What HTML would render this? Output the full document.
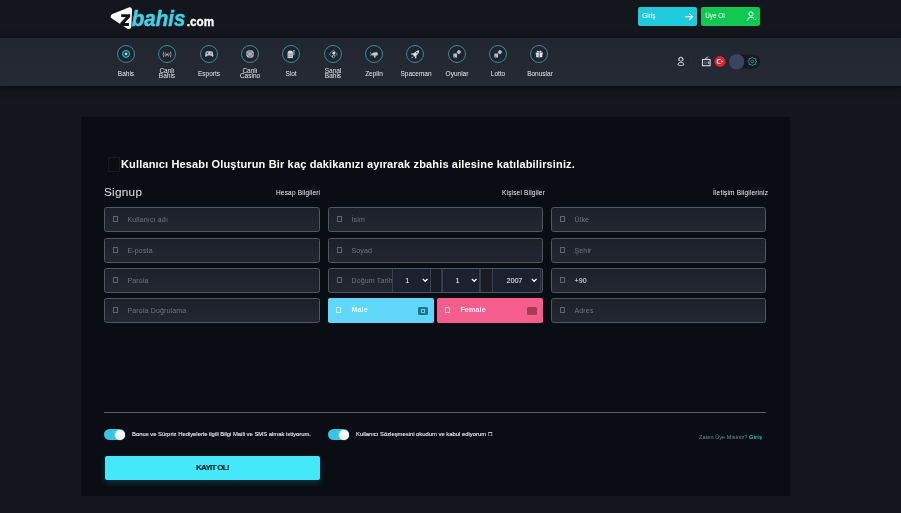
<!DOCTYPE html><html><head><meta charset="utf-8"><style>
*{margin:0;padding:0;box-sizing:border-box}
html,body{width:901px;height:513px;overflow:hidden;background:#13161d;font-family:"Liberation Sans",sans-serif;color:#fff}
.a{position:absolute}
body>div,body>svg{will-change:transform}
#top{left:0;top:0;width:901px;height:38px;background:#14161e}
#nav{left:0;top:38px;width:901px;height:47.8px;background:linear-gradient(#212530,#252a35);box-shadow:0 2px 7px rgba(0,0,0,0.55)}
.btn{top:7.2px;height:19.2px;width:59px;border-radius:2px;font-size:6px;color:#fff}
.btn span{position:absolute;left:4.2px;top:6.3px;line-height:6px;letter-spacing:0px;font-size:6.4px}
.ni{top:44.9px;width:18.4px;height:18.4px;border-radius:50%;border:1px solid #3a8b93;background:rgba(10,30,40,0.22)}
.ni svg{position:absolute;left:0;top:0}
.nl{width:60px;text-align:center;font-size:6.5px;line-height:4.7px;color:#e6e9ed;letter-spacing:0px}
#card{left:81px;top:117px;width:709px;height:379px;background:#0a0d14}
.inp{height:25px;width:216px;background:linear-gradient(#1c2029,#222732);border:1px solid #4f5561;border-radius:2.5px}
.ic{position:absolute;width:4.6px;height:5.6px;border:0.75px solid #5f6570;border-radius:0.5px}
.ph{position:absolute;font-size:7px;line-height:7px;color:#686e7a;letter-spacing:0.15px;white-space:nowrap}
.sec{font-size:6.5px;line-height:7px;color:#e8eaee;letter-spacing:0.18px;white-space:nowrap}
</style></head><body>
<div class="a" id="top"></div><div class="a" id="nav"></div>
<svg class="a" style="left:0;top:0" width="230" height="38" viewBox="0 0 230 38">
<path d="M113.3 16.3 L129.6 9.9 L128.8 26.6 Z" fill="#fff" stroke="#fff" stroke-width="5" stroke-linejoin="round"/>
<path d="M121.2 14.2 H130.2 V17 L124.6 22.9 H128.9 V25.9 H120.2 V23.1 L125.9 17 H121.2 Z" fill="#111318"/>
<text x="131.8" y="26.2" font-family="Liberation Sans" font-weight="bold" font-style="italic" font-size="22.2" fill="#3dd3e8" stroke="#3dd3e8" stroke-width="0.5" textLength="53.5" lengthAdjust="spacingAndGlyphs">bahis</text>
<text x="186.8" y="26.3" font-family="Liberation Sans" font-weight="bold" font-size="13.6" fill="#fff" stroke="#fff" stroke-width="0.35" textLength="27.4" lengthAdjust="spacingAndGlyphs">.com</text>
</svg>
<div class="a btn" style="left:638.2px;background:#1fcadb"><span>Giriş</span><svg class="a" style="left:46px;top:5px" width="10" height="10" viewBox="0 0 10 10"><path d="M1.2 4.7H8.6M5 1.2L8.6 4.7L5 8.2" stroke="#fff" stroke-width="1.1" fill="none"/></svg></div>
<div class="a btn" style="left:701.2px;background:#11c853"><span>Üye Ol</span><svg class="a" style="left:45px;top:4px" width="12" height="11" viewBox="0 0 12 11"><circle cx="5" cy="3" r="2.1" stroke="#fff" stroke-width="0.9" fill="none"/><path d="M1.2 10Q1.4 6.2 5 6.2Q6.8 6.2 7.8 7.2" stroke="#fff" stroke-width="0.9" fill="none"/><path d="M8.6 8.4L10.4 7.2L10 9.2Z" fill="#fff"/></svg></div>
<div class="a ni" style="left:116.85px"><svg width="18.4" height="18.4" viewBox="0 0 18.4 18.4" style="position:absolute;left:-1px;top:-1px"><circle cx="9.05" cy="8.95" r="3.5" fill="#1a4d55" stroke="#4cc6d2" stroke-width="0.9"/><path d="M9.05 7.6L10.35 8.55L9.85 10.1H8.25L7.75 8.55Z" fill="#5fe0ea"/><circle cx="9.05" cy="8.95" r="1.1" fill="#7ff0f5"/></svg></div>
<div class="a nl" style="left:96.05px;top:72.3px">Bahis</div>
<div class="a ni" style="left:158.20px"><svg width="18.4" height="18.4" viewBox="0 0 18.4 18.4" style="position:absolute;left:-1px;top:-1px"><circle cx="9.1" cy="9.45" r="0.85" fill="#d0d3d8"/><path d="M7.5 7.6Q6.6 9.4 7.5 11.2M10.7 7.6Q11.6 9.4 10.7 11.2M5.8 6.6Q4.6 9.4 5.8 12.2M12.4 6.6Q13.6 9.4 12.4 12.2" stroke="#b8bcc3" stroke-width="0.75" fill="none"/><path d="M9.1 9.6L7.6 11.6M9.1 9.6L10.6 11.6" stroke="#9a9ea5" stroke-width="0.5"/></svg></div>
<div class="a nl" style="left:137.40px;top:69.4px">Canlı<br>Bahis</div>
<div class="a ni" style="left:199.55px"><svg width="18.4" height="18.4" viewBox="0 0 18.4 18.4" style="position:absolute;left:-1px;top:-1px"><path d="M5.6 7.6Q5.9 6.2 7.3 6.2H11.2Q12.6 6.2 12.9 7.6L13.4 10.7Q13.5 12 12.3 11.8L10.9 10.4H7.6L6.2 11.8Q5 12 5.1 10.7Z" fill="#c4c7cd"/><path d="M7.4 7.4V9.2M6.5 8.3H8.3" stroke="#3a3e48" stroke-width="0.7"/><circle cx="11" cy="8.2" r="0.6" fill="#3a3e48"/></svg></div>
<div class="a nl" style="left:178.75px;top:72.3px">Esports</div>
<div class="a ni" style="left:240.90px"><svg width="18.4" height="18.4" viewBox="0 0 18.4 18.4" style="position:absolute;left:-1px;top:-1px"><circle cx="9.0" cy="9.0" r="4.0" fill="#a9adb4"/><circle cx="9.0" cy="9.0" r="2.3" fill="none" stroke="#6e727a" stroke-width="0.7"/><path d="M9 5V6.4M9 11.6V13M5 9H6.4M11.6 9H13" stroke="#5a5e66" stroke-width="0.8"/></svg></div>
<div class="a nl" style="left:220.10px;top:69.4px">Canlı<br>Casino</div>
<div class="a ni" style="left:282.25px"><svg width="18.4" height="18.4" viewBox="0 0 18.4 18.4" style="position:absolute;left:-1px;top:-1px"><path d="M5.6 8.2Q5.6 5.4 8.4 5.4Q10.9 5.4 10.9 8.2V13.1H5.6Z" fill="#d6d9de"/><path d="M6.2 9.2H10.3M6.2 11.2H10.3" stroke="#4a4e58" stroke-width="0.6"/><path d="M11.9 5.4V10.2" stroke="#b9bdc4" stroke-width="1"/><circle cx="11.9" cy="5.6" r="0.6" fill="#d6d9de"/></svg></div>
<div class="a nl" style="left:261.45px;top:72.3px">Slot</div>
<div class="a ni" style="left:323.60px"><svg width="18.4" height="18.4" viewBox="0 0 18.4 18.4" style="position:absolute;left:-1px;top:-1px"><path d="M9.4 5.1L13.3 9.1L9.4 13.2L5.3 9.1Z" fill="none" stroke="#a8acb3" stroke-width="0.7"/><circle cx="9.8" cy="8.2" r="1.4" fill="#d8dbe0"/><path d="M8.2 12L9.5 9.6L10.9 11" stroke="#c4c7cd" stroke-width="0.9" fill="none"/></svg></div>
<div class="a nl" style="left:302.80px;top:69.4px">Sanal<br>Bahis</div>
<div class="a ni" style="left:364.95px"><svg width="18.4" height="18.4" viewBox="0 0 18.4 18.4" style="position:absolute;left:-1px;top:-1px"><path d="M6.4 8.9Q8.6 6.6 12.2 7.3Q13.4 8.6 12.6 10.2Q9.6 11.4 6.4 10Z" fill="#c9ccd2"/><path d="M5.3 7.2L6.4 9.4L5.6 11.2" stroke="#a8acb3" stroke-width="0.8" fill="none"/><path d="M8.6 10.6L9 12.6H10.6L10.8 10.6" fill="#b5b9c0"/></svg></div>
<div class="a nl" style="left:344.15px;top:72.3px">Zeplin</div>
<div class="a ni" style="left:406.30px"><svg width="18.4" height="18.4" viewBox="0 0 18.4 18.4" style="position:absolute;left:-1px;top:-1px"><path d="M13.2 5.2Q13.4 7.6 11.4 9.6L9 12L6.6 9.6L9 7.2Q11 5.2 13.2 5.2Z" fill="#dcdfe4"/><path d="M8 8.2L5.6 8.2L4.8 9.4L7.2 9.8ZM10.4 10.6L10.4 13L9.2 13.8L8.8 11.4Z" fill="#c9ccd2"/><circle cx="10.9" cy="7.7" r="0.8" fill="#3a3e48"/><path d="M7.2 11.6L5.6 13.2" stroke="#c9ccd2" stroke-width="1"/></svg></div>
<div class="a nl" style="left:385.50px;top:72.3px">Spaceman</div>
<div class="a ni" style="left:447.65px"><svg width="18.4" height="18.4" viewBox="0 0 18.4 18.4" style="position:absolute;left:-1px;top:-1px"><rect x="5.3" y="8.6" width="3.8" height="3.8" rx="0.5" fill="#b9bdc4"/><rect x="9.2" y="5.4" width="3.4" height="3.4" rx="0.5" fill="#c4c7cd" transform="rotate(40 10.9 7.1)"/><circle cx="6.5" cy="11.2" r="0.45" fill="#4a4e58"/><circle cx="10.9" cy="7.1" r="0.45" fill="#4a4e58"/></svg></div>
<div class="a nl" style="left:426.85px;top:72.3px">Oyunlar</div>
<div class="a ni" style="left:489.00px"><svg width="18.4" height="18.4" viewBox="0 0 18.4 18.4" style="position:absolute;left:-1px;top:-1px"><rect x="5.3" y="8.6" width="3.8" height="3.8" rx="0.5" fill="#b9bdc4"/><rect x="9.2" y="5.4" width="3.4" height="3.4" rx="0.5" fill="#c4c7cd" transform="rotate(40 10.9 7.1)"/><circle cx="6.5" cy="11.2" r="0.45" fill="#4a4e58"/><circle cx="10.9" cy="7.1" r="0.45" fill="#4a4e58"/></svg></div>
<div class="a nl" style="left:468.20px;top:72.3px">Lotto</div>
<div class="a ni" style="left:530.35px"><svg width="18.4" height="18.4" viewBox="0 0 18.4 18.4" style="position:absolute;left:-1px;top:-1px"><path d="M5.7 7.4H12.8V9.2H5.7ZM6.2 9.2H12.3V12.3H6.2Z" fill="#dfe2e6"/><path d="M9.25 7.4V12.3" stroke="#3a3e48" stroke-width="0.8"/><path d="M9.2 7.2Q7.6 5.2 6.9 6.2Q6.6 7 9.2 7.2Q11.8 7 11.5 6.2Q10.8 5.2 9.2 7.2" fill="#dfe2e6" stroke="#dfe2e6" stroke-width="0.4"/></svg></div>
<div class="a nl" style="left:509.55px;top:72.3px">Bonuslar</div>
<svg class="a" style="left:670px;top:50px" width="100" height="25" viewBox="670 50 100 25">
<circle cx="680.9" cy="59.4" r="1.9" fill="none" stroke="#cfd3d9" stroke-width="0.9"/>
<path d="M677.8 64.9 Q678 62.3 680.9 62.3 Q683.8 62.3 684 64.9 Q680.9 66.2 677.8 64.9Z" fill="none" stroke="#cfd3d9" stroke-width="0.9"/>
<path d="M678.6 60.6 Q678.2 57 680.9 57 Q683.6 57 683.2 60.6" fill="none" stroke="#cfd3d9" stroke-width="0.7"/>
<path d="M691.2 56.8V66" stroke="#2b313b" stroke-width="0.8"/>
<rect x="702.5" y="59.5" width="7.6" height="6.2" fill="none" stroke="#d5d8dd" stroke-width="1.1"/>
<rect x="704" y="61" width="3.6" height="3.2" fill="#4a4f59"/>
<rect x="708.2" y="61.4" width="1" height="2.6" fill="#d5d8dd"/>
<path d="M705 59.2L706.3 57.6L707.3 59M706.3 57.6L708.6 56.8" stroke="#d5d8dd" stroke-width="0.7" fill="none"/>
<path d="M728.5 61.5 A7 7 0 0 1 735.5 54.5 H753 A7.1 7.1 0 0 1 753 68.7 H735.5 A7 7 0 0 1 728.5 61.5Z" fill="#151a21"/>
<circle cx="720" cy="61.5" r="5.4" fill="#de2431"/>
<circle cx="719.2" cy="61.5" r="2.5" fill="#fff"/>
<circle cx="719.9" cy="61.5" r="2" fill="#de2431"/>
<circle cx="722.4" cy="61.5" r="0.8" fill="#fff"/>
<circle cx="736.6" cy="61.7" r="7.7" fill="#3a4560"/>
<path d="M752.4 56.9 L753.6 58.6 L755.8 58.5 L755.6 60.6 L757 61.4 L755.6 62.4 L755.8 64.4 L753.6 64.3 L752.4 66 L751.2 64.3 L749 64.4 L749.2 62.4 L747.8 61.4 L749.2 60.6 L749 58.5 L751.2 58.6Z" fill="none" stroke="#2f9da3" stroke-width="0.8"/>
<circle cx="752.4" cy="61.4" r="1.4" fill="none" stroke="#2f9da3" stroke-width="0.7"/>
</svg>
<div class="a" id="card"></div>
<div class="a" style="left:107.8px;top:157px;width:12px;height:15px;background:#0b0d11;border:1px solid #171a20"></div>
<div class="a" style="left:121px;top:158px;font-size:11px;font-weight:bold;line-height:13px;color:#fff;letter-spacing:0.15px;white-space:nowrap">Kullanıcı Hesabı Oluşturun Bir kaç dakikanızı ayırarak zbahis ailesine katılabilirsiniz.</div>
<div class="a" style="left:104.4px;top:186.3px;font-size:11.8px;line-height:13px;color:#dfe2e6;letter-spacing:0.25px">Signup</div>
<div class="a" style="left:303.5px;top:185px;font-size:13px;line-height:14px;font-weight:bold;color:transparent;-webkit-text-stroke:0.6px #1d2028;white-space:nowrap">01</div>
<div class="a" style="left:527.3px;top:185px;font-size:13px;line-height:14px;font-weight:bold;color:transparent;-webkit-text-stroke:0.6px #1d2028;white-space:nowrap">02</div>
<div class="a" style="left:750.5px;top:185px;font-size:13px;line-height:14px;font-weight:bold;color:transparent;-webkit-text-stroke:0.6px #1d2028;white-space:nowrap">03</div>
<div class="a sec" style="left:275.6px;top:188.6px">Hesap Bilgileri</div>
<div class="a sec" style="left:502.4px;top:188.6px">Kişisel Bilgiler</div>
<div class="a sec" style="left:712.6px;top:188.6px">İletişim Bilgileriniz</div>
<div class="a inp" style="left:104.4px;top:207.1px;width:216px;height:24.6px"><div class="ic" style="left:7.5px;top:7.6px;width:5px;height:6.2px"></div><div class="ph" style="left:22.5px;top:7.5px;color:#6f7581">Kullanıcı adı</div></div>
<div class="a inp" style="left:104.4px;top:237.6px;width:216px;height:24.6px"><div class="ic" style="left:7.5px;top:7.6px;width:5px;height:6.2px"></div><div class="ph" style="left:22.5px;top:7.5px;color:#6f7581">E-posta</div></div>
<div class="a inp" style="left:104.4px;top:267.9px;width:216px;height:24.6px"><div class="ic" style="left:7.5px;top:7.6px;width:5px;height:6.2px"></div><div class="ph" style="left:22.5px;top:7.5px;color:#6f7581">Parola</div></div>
<div class="a inp" style="left:104.4px;top:298.3px;width:216px;height:24.6px"><div class="ic" style="left:7.5px;top:7.6px;width:5px;height:6.2px"></div><div class="ph" style="left:22.5px;top:7.5px;color:#6f7581">Parola Doğrulama</div></div>
<div class="a inp" style="left:328.2px;top:207.1px;width:215px;height:24.6px"><div class="ic" style="left:7.5px;top:7.6px;width:5px;height:6.2px"></div><div class="ph" style="left:22.5px;top:7.5px;color:#6f7581">İsim</div></div>
<div class="a inp" style="left:328.2px;top:237.6px;width:215px;height:24.6px"><div class="ic" style="left:7.5px;top:7.6px;width:5px;height:6.2px"></div><div class="ph" style="left:22.5px;top:7.5px;color:#6f7581">Soyad</div></div>
<div class="a inp" style="left:328.2px;top:267.9px;width:215px;height:24.6px"><div class="ic" style="left:7.5px;top:7.6px;width:5px;height:6.2px"></div><div class="ph" style="left:22.5px;top:7.5px;color:#6f7581">Doğum Tarihi</div></div>
<div class="a inp" style="left:551.0px;top:207.1px;width:215px;height:24.6px"><div class="ic" style="left:7.5px;top:7.6px;width:5px;height:6.2px"></div><div class="ph" style="left:22.5px;top:7.5px;color:#6f7581">Ülke</div></div>
<div class="a inp" style="left:551.0px;top:237.6px;width:215px;height:24.6px"><div class="ic" style="left:7.5px;top:7.6px;width:5px;height:6.2px"></div><div class="ph" style="left:22.5px;top:7.5px;color:#6f7581">Şehir</div></div>
<div class="a inp" style="left:551.0px;top:267.9px;width:215px;height:24.6px"><div class="ic" style="left:7.5px;top:7.6px;width:5px;height:6.2px"></div><div class="ph" style="left:22.5px;top:7.5px;color:#e8eaee">+90</div></div>
<div class="a inp" style="left:551.0px;top:298.3px;width:215px;height:24.6px"><div class="ic" style="left:7.5px;top:7.6px;width:5px;height:6.2px"></div><div class="ph" style="left:22.5px;top:7.5px;color:#6f7581">Adres</div></div>
<div class="a" style="left:328.2px;top:298.4px;width:105.5px;height:24.8px;background:#60d7f8;border-radius:2px"><div class="ic" style="left:8px;top:8.9px;width:5px;height:6.2px;border-color:#c8f4ff"></div><div class="ph" style="left:23.4px;top:9.3px;color:#effdff;font-weight:bold;font-size:7.1px;letter-spacing:0.15px">Male</div><div class="a" style="left:90px;top:8.6px;width:9.6px;height:8.7px;background:#1b7590;border-radius:1.5px"><div class="a" style="left:3px;top:2.5px;width:3.6px;height:3.6px;border:0.7px solid #7fc8da"></div></div></div>
<div class="a" style="left:437.3px;top:298.4px;width:105.6px;height:24.8px;background:#f55e8c;border-radius:2px"><div class="ic" style="left:8px;top:8.9px;width:5px;height:6.2px;border-color:#ffc0d2"></div><div class="ph" style="left:23.4px;top:9.3px;color:#fff0f4;font-weight:bold;font-size:7.1px;letter-spacing:0.15px">Female</div><div class="a" style="left:90px;top:8.6px;width:9.6px;height:8.7px;background:#a63a5a;border-radius:1.5px"></div></div>
<div class="a" style="left:430.3px;top:269px;width:12.3px;height:23px;background:#1a1c23;border-left:1px solid #353a45;border-right:1px solid #353a45"></div>
<div class="a" style="left:479.6px;top:269px;width:12.9px;height:23px;background:#1a1c23;border-left:1px solid #353a45;border-right:1px solid #353a45"></div>
<div class="a" style="left:392.3px;top:269px;width:38.5px;height:23px;background:#1c2130;border-left:1px solid #383e4a;border-right:1px solid #383e4a"><div class="a" style="left:12.3px;top:8.2px;font-size:7.4px;line-height:8px;color:#f0f2f5;letter-spacing:-0.2px">1</div><svg class="a" style="left:28.7px;top:9px" width="7" height="5" viewBox="0 0 7 5"><path d="M0.8 0.9L3.2 3.3L5.6 0.9" stroke="#fff" stroke-width="1.3" fill="none"/></svg></div>
<div class="a" style="left:442.1px;top:269px;width:38.0px;height:23px;background:#1c2130;border-left:1px solid #383e4a;border-right:1px solid #383e4a"><div class="a" style="left:12.5px;top:8.2px;font-size:7.4px;line-height:8px;color:#f0f2f5;letter-spacing:-0.2px">1</div><svg class="a" style="left:28.3px;top:9px" width="7" height="5" viewBox="0 0 7 5"><path d="M0.8 0.9L3.2 3.3L5.6 0.9" stroke="#fff" stroke-width="1.3" fill="none"/></svg></div>
<div class="a" style="left:492px;top:269px;width:49.0px;height:23px;background:#1c2130;border-left:1px solid #383e4a;border-right:1px solid #383e4a"><div class="a" style="left:13.6px;top:8.2px;font-size:7.4px;line-height:8px;color:#f0f2f5;letter-spacing:-0.2px">2007</div><svg class="a" style="left:38.2px;top:9px" width="7" height="5" viewBox="0 0 7 5"><path d="M0.8 0.9L3.2 3.3L5.6 0.9" stroke="#fff" stroke-width="1.3" fill="none"/></svg></div>
<div class="a" style="left:104.2px;top:412px;width:662px;height:1px;background:#5c6068"></div>
<div class="a" style="left:104.4px;top:428.5px;width:21.4px;height:11.4px;border-radius:6px;background:#36c5e6"><div class="a" style="right:0.6px;top:0.6px;width:10.2px;height:10.2px;border-radius:50%;background:#f4fbff;box-shadow:0 0 1.5px rgba(255,255,255,0.6)"></div></div>
<div class="a" style="left:132.3px;top:431.2px;font-size:5.9px;line-height:6px;color:#eceef2;white-space:nowrap;letter-spacing:-0.02px;-webkit-text-stroke:0.1px #eceef2">Bonus ve Sürpriz Hediyelerle ilgili Bilgi Maili ve SMS almak istiyorum.</div>
<div class="a" style="left:327.7px;top:428.5px;width:21.4px;height:11.4px;border-radius:6px;background:#36c5e6"><div class="a" style="right:0.6px;top:0.6px;width:10.2px;height:10.2px;border-radius:50%;background:#f4fbff;box-shadow:0 0 1.5px rgba(255,255,255,0.6)"></div></div>
<div class="a" style="left:355.6px;top:431.2px;font-size:5.9px;line-height:6px;color:#eceef2;white-space:nowrap;letter-spacing:-0.02px;-webkit-text-stroke:0.1px #eceef2">Kullanıcı Sözleşmesini okudum ve kabul ediyorum <span style='font-size:5px'>☐</span></div>
<div class="a" style="left:699px;top:434.4px;font-size:5.6px;line-height:6px;color:#7c828c;white-space:nowrap;letter-spacing:0.05px">Zaten Üye Misiniz? <b style="color:#3bbccb">Giriş</b></div>
<div class="a" style="left:104.9px;top:455.6px;width:215px;height:24.2px;background:#45e8f8;border-radius:2px;box-shadow:0 3px 6px rgba(20,120,140,0.35)"><div class="a" style="left:0;width:215px;top:8.2px;text-align:center;font-size:8.1px;line-height:8px;font-weight:bold;color:#08242c;letter-spacing:-0.75px;-webkit-text-stroke:0.2px #08242c">KAYIT OL!</div></div>
</body></html>
